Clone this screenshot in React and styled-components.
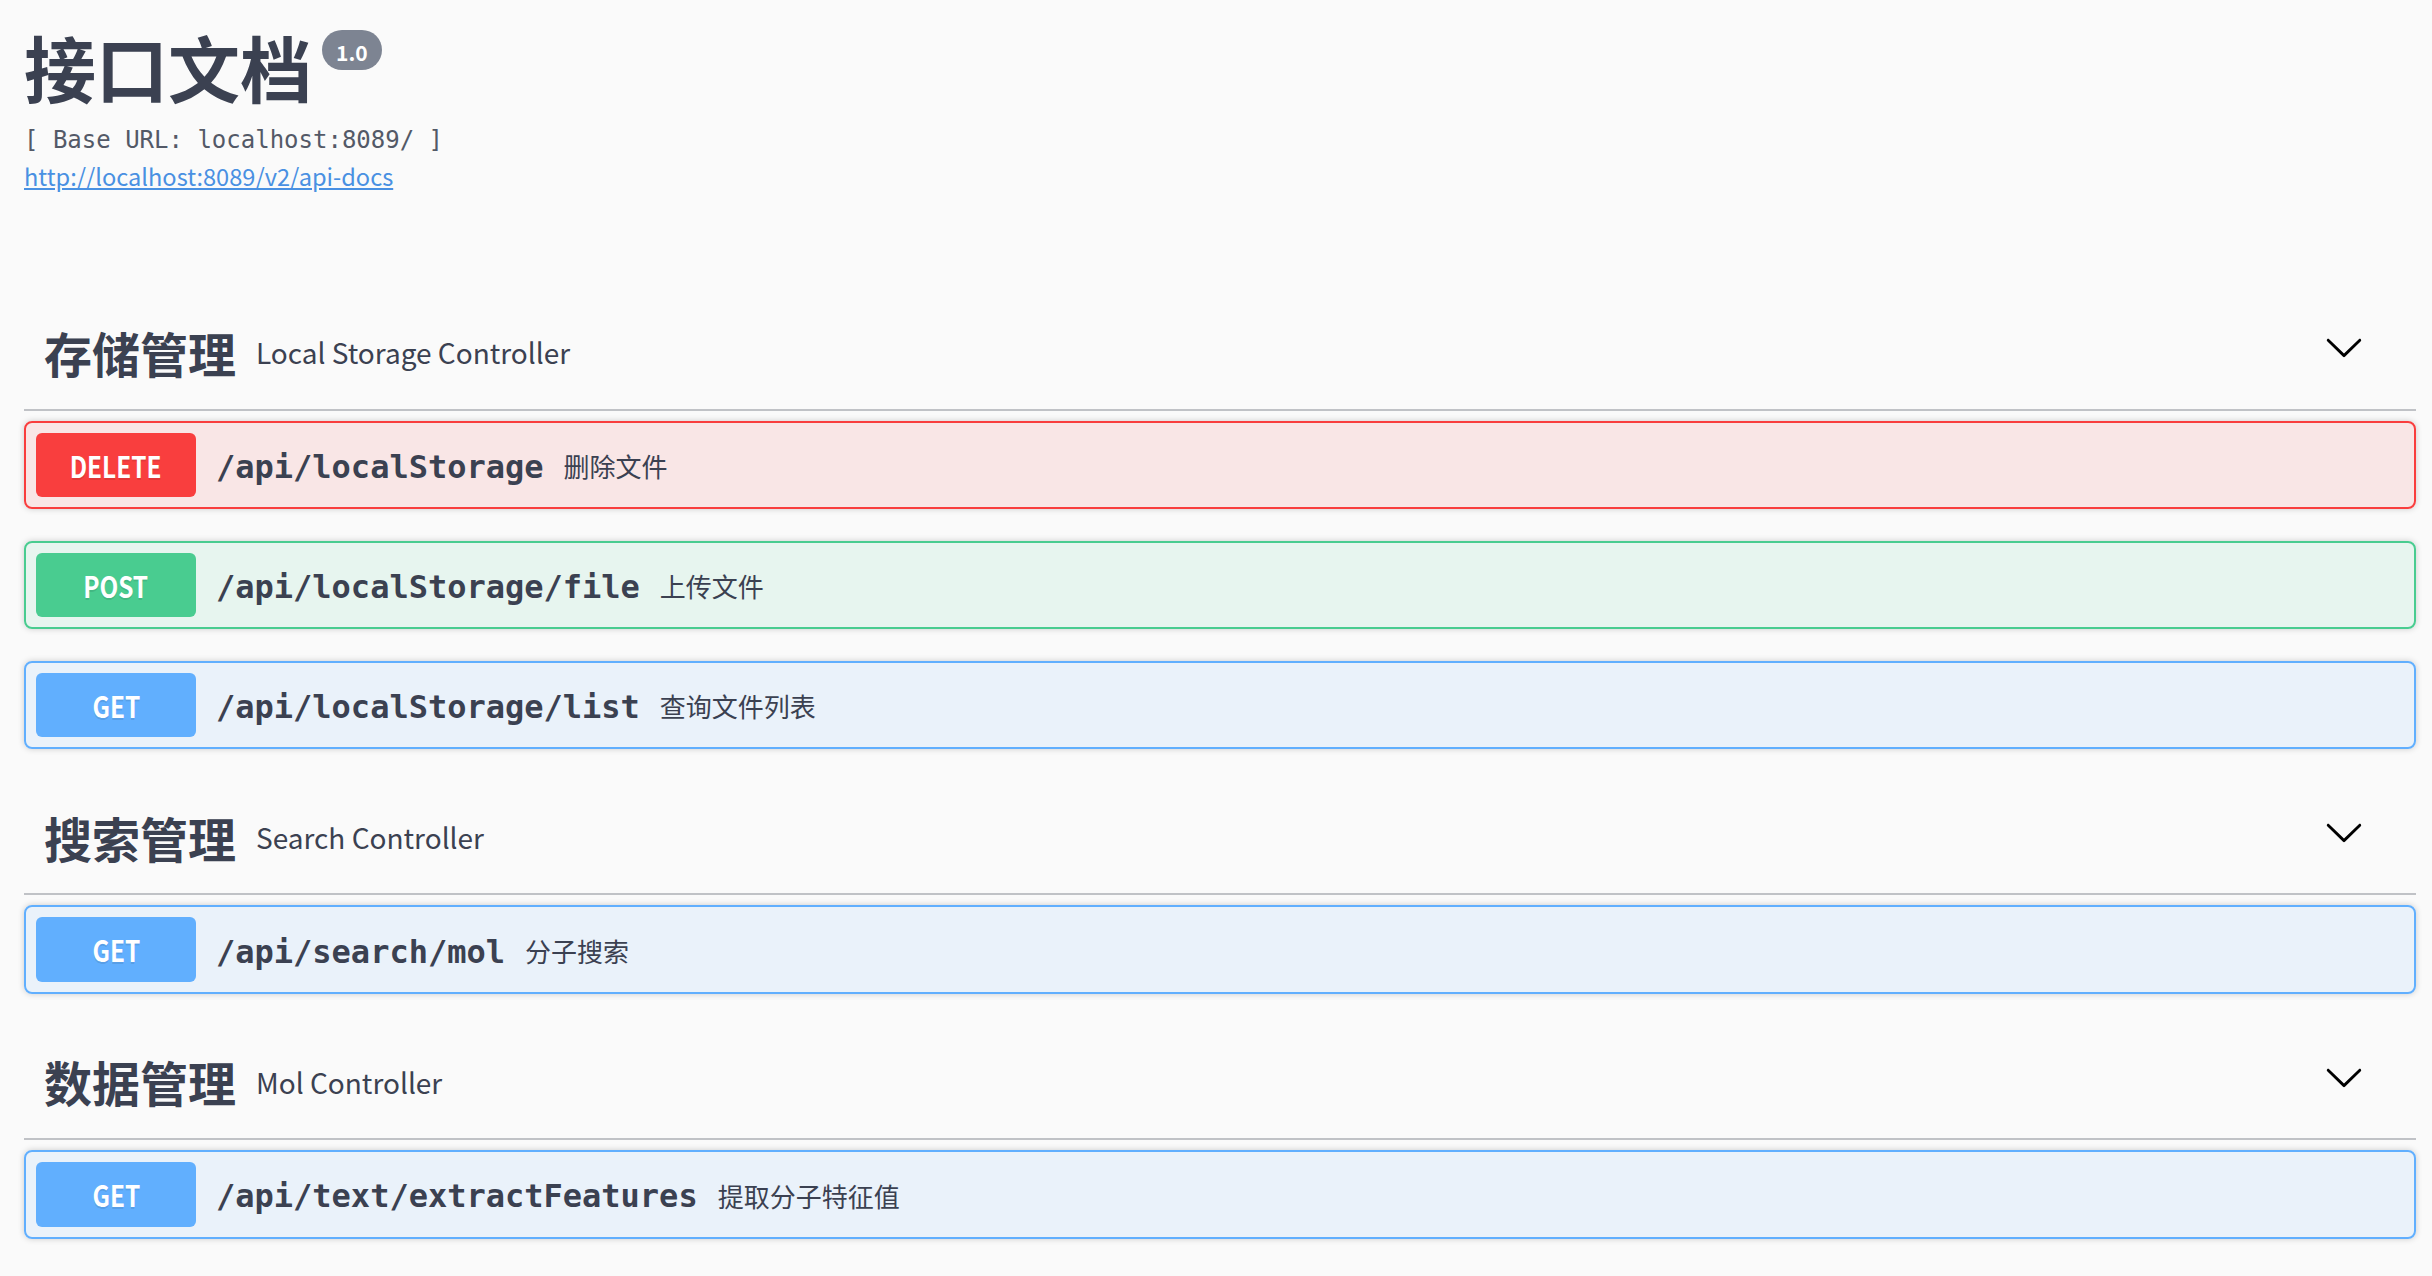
import React from "react";
import styled, { createGlobalStyle } from "styled-components";

const GlobalStyle = createGlobalStyle`
  html, body { margin: 0; padding: 0; background: #fafafa; }
  body {
    font-family: "Noto Sans CJK SC", "Noto Sans", sans-serif;
    color: #3b4151;
  }
  * { box-sizing: border-box; }
`;

const SANS = `"Noto Sans CJK SC", "Noto Sans", sans-serif`;

const METHOD_COLORS = {
  delete: { main: "#f93e3e", bg: "rgba(249, 62, 62, 0.1)" },
  post: { main: "#49cc90", bg: "rgba(73, 204, 144, 0.1)" },
  get: { main: "#61affe", bg: "rgba(97, 175, 254, 0.1)" },
};

const Page = styled.div`
  padding: 14px 16px 0 24px;
  font-family: ${SANS};
`;

const Info = styled.div`
  display: flex;
  flex-direction: column;
`;

const TitleRow = styled.div`
  display: flex;
  align-items: flex-start;
`;

const Title = styled.h2`
  margin: 0;
  font-family: ${SANS};
  font-size: 72px;
  line-height: 104px;
  font-weight: 700;
  color: #3b4151;
`;

const Version = styled.span`
  margin: 16px 0 0 10px;
  height: 40px;
  padding: 8px 14px 0;
  font-family: ${SANS};
  font-size: 21px;
  line-height: 29px;
  font-weight: 700;
  color: #fff;
  background: #7d8492;
  border-radius: 57px;
`;

const BaseUrl = styled.pre`
  margin: 10px 0 0;
  font-family: "DejaVu Sans Mono", "Liberation Mono", monospace;
  font-size: 24px;
  line-height: 24px;
  font-weight: 300;
  color: #535967;
`;

const DocLink = styled.a`
  align-self: flex-start;
  margin-top: 6.5px;
  font-family: ${SANS};
  font-size: 23.6px;
  line-height: 34px;
  color: #4990e2;
  text-decoration: underline;
`;

const Sections = styled.div`
  margin-top: 103.5px;
  display: flex;
  flex-direction: column;
`;

const TagSection = styled.section`
  display: flex;
  flex-direction: column;
`;

const Tag = styled.h3`
  margin: 0 0 10px;
  display: flex;
  align-items: center;
  padding: 20px 40px 20px 20px;
  border-bottom: 2px solid rgba(59, 65, 81, 0.3);
  cursor: pointer;
  font-family: ${SANS};
`;

const TagName = styled.span`
  font-size: 48px;
  line-height: 72.7px;
  font-weight: 700;
  color: #3b4151;
`;

const TagDesc = styled.small`
  flex: 1;
  padding: 0 20px;
  font-size: 28px;
  line-height: 40px;
  font-weight: 400;
  color: #3b4151;
`;

const ExpandButton = styled.button`
  display: flex;
  border: none;
  background: none;
  padding: 0 12px;
  margin-bottom: 10px;
  cursor: pointer;
`;

const OpBlock = styled.div`
  margin-bottom: 31.5px;
  border: 2px solid ${(p) => METHOD_COLORS[p.$method].main};
  border-radius: 8px;
  background: ${(p) => METHOD_COLORS[p.$method].bg};
  box-shadow: 0 0 6px rgba(0, 0, 0, 0.19);
`;

const Summary = styled.div`
  display: flex;
  align-items: center;
  padding: 10px;
  cursor: pointer;
`;

const Method = styled.span`
  display: flex;
  justify-content: center;
  min-width: 160px;
  padding: 12px 0;
  font-family: ${SANS};
  font-size: 29px;
  line-height: 40.5px;
  font-weight: 700;
  color: #fff;
  background: ${(p) => METHOD_COLORS[p.$method].main};
  border-radius: 6px;
  text-shadow: 0 2px 0 rgba(0, 0, 0, 0.1);
`;

const MethodLabel = styled.span`
  display: inline-block;
  transform: scaleX(0.84);
`;

const Path = styled.span`
  padding: 4px 20px 0;
  font-family: "DejaVu Sans Mono", "Liberation Mono", monospace;
  font-size: 32px;
  font-weight: 700;
  color: #3b4151;
`;

const Description = styled.div`
  flex: 1;
  padding-top: 2px;
  font-family: ${SANS};
  font-size: 26px;
  color: #3b4151;
`;

const Arrow = () => (
  <svg width="40" height="40" viewBox="0 0 20 20" aria-hidden="true">
    <path
      fill="#000"
      d="M17.418 6.109c.272-.268.709-.268.979 0s.271.701 0 .969l-7.908 7.830c-.27.268-.707.268-.979 0l-7.908-7.830c-.27-.268-.27-.701 0-.969.271-.268.709-.268.979 0L10 13.25l7.418-7.141z"
    />
  </svg>
);

const sections = [
  {
    name: "存储管理",
    desc: "Local Storage Controller",
    ops: [
      { method: "delete", path: "/api/localStorage", desc: "删除文件" },
      { method: "post", path: "/api/localStorage/file", desc: "上传文件" },
      { method: "get", path: "/api/localStorage/list", desc: "查询文件列表" },
    ],
  },
  {
    name: "搜索管理",
    desc: "Search Controller",
    ops: [{ method: "get", path: "/api/search/mol", desc: "分子搜索" }],
  },
  {
    name: "数据管理",
    desc: "Mol Controller",
    ops: [
      { method: "get", path: "/api/text/extractFeatures", desc: "提取分子特征值" },
    ],
  },
];

export default function App() {
  return (
    <>
      <GlobalStyle />
      <Page>
        <Info>
          <TitleRow>
            <Title>接口文档</Title>
            <Version>1.0</Version>
          </TitleRow>
          <BaseUrl>[ Base URL: localhost:8089/ ]</BaseUrl>
          <DocLink href="#">http://localhost:8089/v2/api-docs</DocLink>
        </Info>
        <Sections>
          {sections.map((s) => (
            <TagSection key={s.name}>
              <Tag>
                <TagName>{s.name}</TagName>
                <TagDesc>{s.desc}</TagDesc>
                <ExpandButton aria-label="expand">
                  <Arrow />
                </ExpandButton>
              </Tag>
              {s.ops.map((op) => (
                <OpBlock key={op.path + op.method} $method={op.method}>
                  <Summary>
                    <Method $method={op.method}>
                      <MethodLabel>{op.method.toUpperCase()}</MethodLabel>
                    </Method>
                    <Path>{op.path}</Path>
                    <Description>{op.desc}</Description>
                  </Summary>
                </OpBlock>
              ))}
            </TagSection>
          ))}
        </Sections>
      </Page>
    </>
  );
}
